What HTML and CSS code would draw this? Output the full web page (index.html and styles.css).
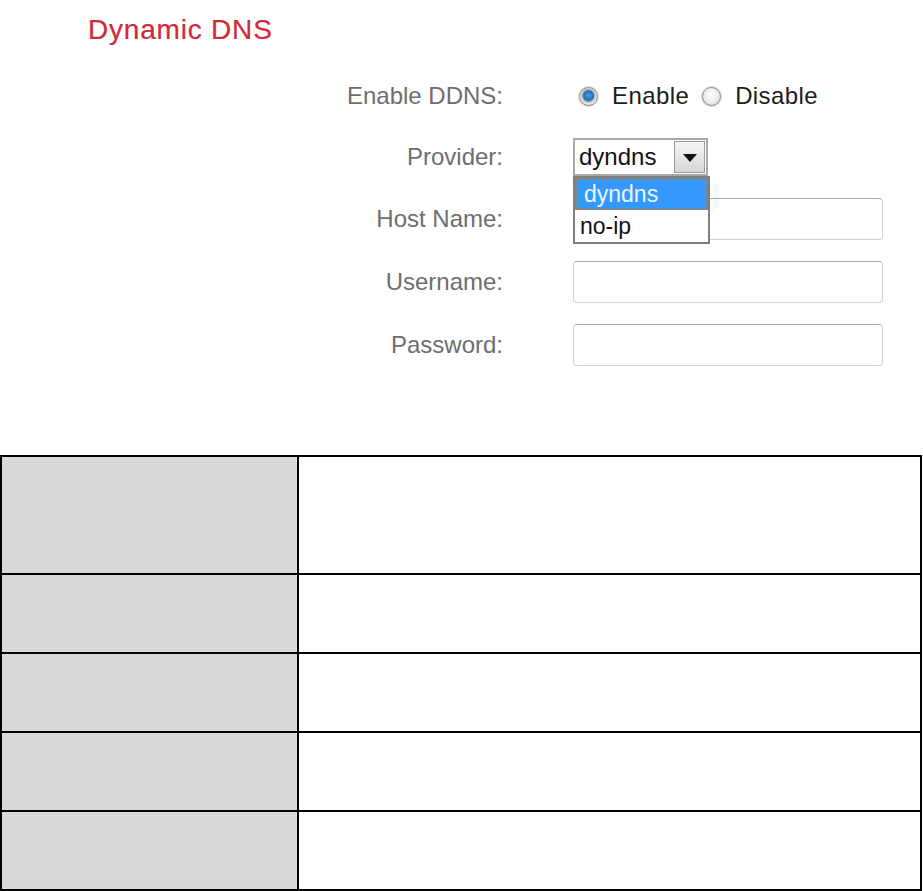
FILE: index.html
```html
<!DOCTYPE html>
<html>
<head>
<meta charset="utf-8">
<link rel="stylesheet" href="styles.css">
</head>
<body>
<h1 class="title">Dynamic DNS</h1>
<div class="form">
  <div class="label r1">Enable DDNS:</div>
  <div class="field r1">
    <span class="radio checked"></span><span class="opt">Enable</span>
    <span class="radio"></span><span class="opt">Disable</span>
  </div>
  <div class="label r2">Provider:</div>
  <div class="field r2">
    <div class="select">
      <span class="sel-text">dyndns</span>
      <span class="sel-btn"><span class="tri"></span></span>
      <div class="list">
        <div class="item active">dyndns</div>
        <div class="item">no-ip</div>
      </div>
    </div>
  </div>
  <div class="label r3">Host Name:</div>
  <div class="field r3"><div class="input"></div></div>
  <div class="label r3">Username:</div>
  <div class="field r3"><div class="input"></div></div>
  <div class="label r3">Password:</div>
  <div class="field r3"><div class="input"></div></div>
</div>
<div class="desc">
  <div class="cell key"></div><div class="cell val"></div>
  <div class="cell key"></div><div class="cell val"></div>
  <div class="cell key"></div><div class="cell val"></div>
  <div class="cell key"></div><div class="cell val"></div>
  <div class="cell key"></div><div class="cell val"></div>
</div>
</body>
</html>
```
FILE: styles.css
```css
*, *::before, *::after {
  box-sizing: border-box;
}
html, body {
  margin: 0;
  padding: 0;
  background: #fff;
}
body {
  font-family: "Liberation Sans", Arial, sans-serif;
  width: 923px;
}
.title {
  margin: 13px 0 0 88px;
  font-size: 28px;
  line-height: 34px;
  font-weight: normal;
  letter-spacing: 0.8px;
  color: #d02a3a;
  -webkit-text-stroke: 0.2px #d02a3a;
}
.form {
  margin-top: 19px;
  display: grid;
  grid-template-columns: 503px 1fr;
  column-gap: 70px;
}
.label {
  font-size: 24px;
  color: #6e6e6e;
  display: flex;
  align-items: center;
  justify-content: flex-end;
}
.field {
  display: flex;
  align-items: center;
  font-size: 24px;
  color: #1c1c1c;
}
.r1 { height: 60px; }
.r2 { height: 61px; }
.r3 { height: 63px; }
.r1.field { padding-left: 6px; }
.radio {
  width: 19px;
  height: 19px;
  border-radius: 50%;
  border: 1px solid #8d8d8d;
  box-shadow: 0 0 0 1px #dcdcdc;
  background: radial-gradient(circle at 50% 40%, #ffffff 0%, #ececec 55%, #cfcfcf 100%);
  margin-right: 14px;
  flex: none;
}
.radio.checked {
  background: radial-gradient(circle at 50% 45%, #49a6e6 0%, #1a6fb8 38%, #9aa4ae 46%, #e8e8e8 62%, #cfcfcf 100%);
}
.opt {
  margin-right: 13px;
  letter-spacing: 0.4px;
}
.select {
  position: relative;
  width: 135px;
  height: 38px;
  border: 2px solid #a8a8a8;
  display: flex;
  align-items: center;
  background: #fff;
}
.sel-text {
  padding-left: 4px;
  flex: 1;
  color: #111;
}
.sel-btn {
  width: 31px;
  height: 32px;
  margin-right: 1px;
  border: 1px solid #9a9a9a;
  background: linear-gradient(#f6f6f6, #d6d6d6);
  display: flex;
  align-items: center;
  justify-content: center;
}
.tri {
  width: 0;
  height: 0;
  border-left: 7px solid transparent;
  border-right: 7px solid transparent;
  border-top: 8px solid #111;
  margin-top: 3px;
}
.list {
  position: absolute;
  left: -2px;
  top: 36px;
  width: 137px;
  border: 2px solid #7d7f85;
  background: #fff;
  z-index: 2;
}
.item {
  height: 32px;
  line-height: 32px;
  font-size: 23px;
  padding-left: 5px;
  color: #111;
}
.item.active {
  background: #3399ff;
  color: #eef5ff;
  border: 2px dotted #b07a3a;
  line-height: 28px;
  padding-left: 7px;
}
.input {
  width: 310px;
  height: 42px;
  border: 1px solid #cfd2d6;
  border-top-color: #a9a9a9;
  border-radius: 4px;
  background: #fff;
}
.desc {
  margin-top: 79px;
  width: 922px;
  border-top: 2px solid #000;
  border-left: 2px solid #000;
  display: grid;
  grid-template-columns: 297px 623px;
  grid-template-rows: 118px 79px 79px 79px 79px;
}
.cell {
  border-right: 2px solid #000;
  border-bottom: 2px solid #000;
}
.key {
  background: #d9d9d9;
}
.val {
  background: #fff;
}
```
